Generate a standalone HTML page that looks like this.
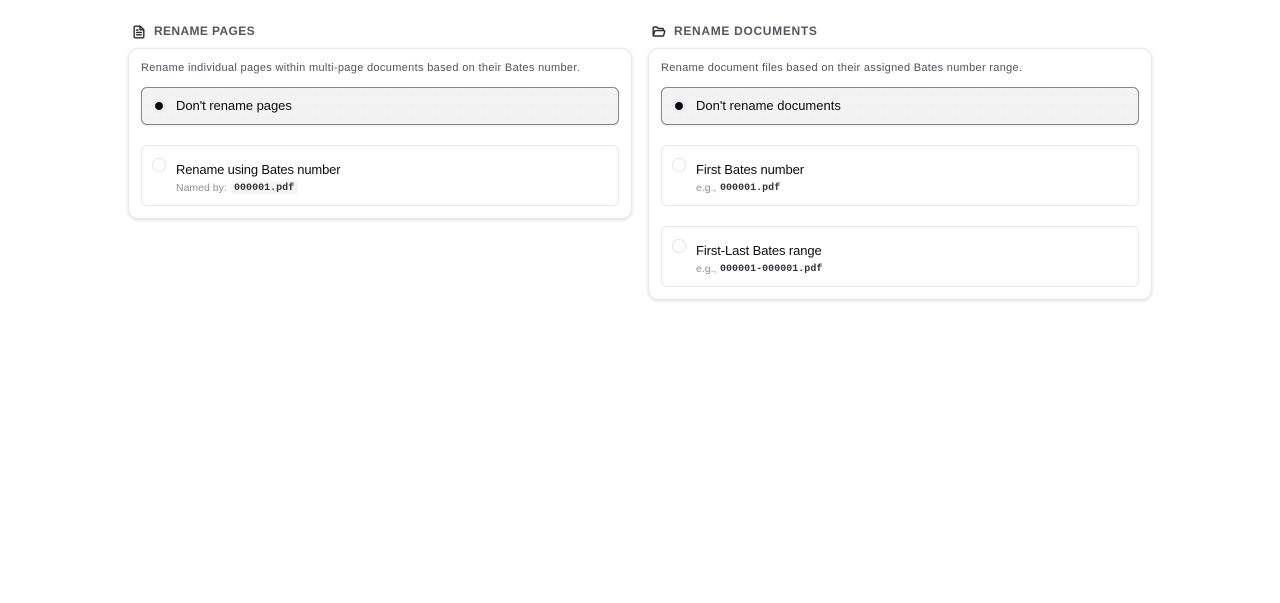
<!DOCTYPE html>
<html><head><meta charset="utf-8"><style>
html,body{margin:0;padding:0;background:#fff;width:1280px;height:603px;overflow:hidden;font-family:"Liberation Sans",sans-serif}
.a{position:absolute;box-sizing:border-box}
.t{position:absolute;white-space:nowrap}
.card{background:#fff;border:1px solid #e7e8eb;border-radius:10px;box-shadow:0 1px 3px rgba(0,0,0,.13)}
.opt{background:#fff;border:1px solid #e7e8eb;border-radius:6px}
.sel{border:1px solid #85878b;background-color:#f3f3f4;background-image:radial-gradient(circle,#e6e6e8 .6px,transparent .9px);background-size:12px 12px;box-shadow:0 1px 2px rgba(0,0,0,.08)}
.h{font-size:12px;font-weight:bold;color:#52565e;line-height:14px}
.d{font-size:11px;color:#4f535b;line-height:14px}
.l{font-size:13px;color:#0c0c10;line-height:16px}
.s{font-size:10.5px;color:#8a8e96;line-height:12px}
.m{font-family:"Liberation Mono",monospace;font-size:10px;font-weight:bold;color:#33363c;line-height:12px;letter-spacing:.02px}
.halo{width:14px;height:14px;border-radius:50%;background:#ededf1}
.dot{width:8px;height:8px;border-radius:50%;background:#0a0a0a}
.r{width:14px;height:14px;border-radius:50%;background:#fff;border:1px solid #e4e5e8}
</style></head><body>
<svg class="a" style="left:132px;top:24.6px" width="14" height="14" viewBox="0 0 14 14" fill="none" stroke="#26282d" stroke-width="1.4" stroke-linejoin="round" stroke-linecap="round"><path d="M2.2 2.2a1 1 0 0 1 1-1h5l3.6 3.6v7a1 1 0 0 1-1 1H3.2a1 1 0 0 1-1-1z"/><path d="M8 1.4v3.4h3.6M4.6 7.4h4.8M4.6 9.8h4.8M4.6 5h1.4"/></svg>
<div class="t h" style="left:154px;top:24px;letter-spacing:.38px">RENAME PAGES</div>
<div class="a card" style="left:128px;top:48px;width:504px;height:171px"></div>
<div class="t d" style="left:141px;top:61px;letter-spacing:.33px">Rename individual pages within multi-page documents based on their Bates number.</div>
<div class="a opt sel" style="left:141px;top:87px;width:478px;height:38px"></div>
<div class="a halo" style="left:152px;top:99px"></div><div class="a dot" style="left:155px;top:102px"></div>
<div class="t l" style="left:176px;top:98px;letter-spacing:-.05px">Don't rename pages</div>
<div class="a opt" style="left:141px;top:145px;width:478px;height:61px"></div>
<div class="a r" style="left:152px;top:158px"></div>
<div class="t l" style="left:176px;top:162px;letter-spacing:-.16px">Rename using Bates number</div>
<div class="t s" style="left:176px;top:182px">Named by:</div>
<div class="a" style="left:231px;top:181px;width:67px;height:13px;background:#f5f5f6;border-radius:3px"></div>
<div class="t m" style="left:234px;top:183px">000001.pdf</div>

<svg class="a" style="left:652px;top:24.6px" width="14" height="14" viewBox="0 0 14 14" fill="none" stroke="#26282d" stroke-width="1.4" stroke-linejoin="round" stroke-linecap="round"><path d="M1.2 10.6V3a1 1 0 0 1 1-1h2.6l1.3 1.4h4.2a1 1 0 0 1 1 1v1.2"/><path d="M1.2 10.6l1.5-4.2a1 1 0 0 1 1-.8h8.2a.8.8 0 0 1 .8 1l-1 3.6a1 1 0 0 1-1 .8H2.2a1 1 0 0 1-1-.4z"/></svg>
<div class="t h" style="left:674px;top:24px;letter-spacing:.68px">RENAME DOCUMENTS</div>
<div class="a card" style="left:648px;top:48px;width:504px;height:252px"></div>
<div class="t d" style="left:661px;top:61px;letter-spacing:.31px">Rename document files based on their assigned Bates number range.</div>
<div class="a opt sel" style="left:661px;top:87px;width:478px;height:38px"></div>
<div class="a halo" style="left:672px;top:99px"></div><div class="a dot" style="left:675px;top:102px"></div>
<div class="t l" style="left:696px;top:98px">Don't rename documents</div>
<div class="a opt" style="left:661px;top:145px;width:478px;height:61px"></div>
<div class="a r" style="left:672px;top:158px"></div>
<div class="t l" style="left:696px;top:162px;letter-spacing:-.1px">First Bates number</div>
<div class="t s" style="left:696px;top:182px">e.g.,</div>
<div class="t m" style="left:720px;top:183px">000001.pdf</div>
<div class="a opt" style="left:661px;top:226px;width:478px;height:61px"></div>
<div class="a r" style="left:672px;top:239px"></div>
<div class="t l" style="left:696px;top:243px;letter-spacing:-.1px">First-Last Bates range</div>
<div class="t s" style="left:696px;top:263px">e.g.,</div>
<div class="t m" style="left:720px;top:264px">000001-000001.pdf</div>
</body></html>
